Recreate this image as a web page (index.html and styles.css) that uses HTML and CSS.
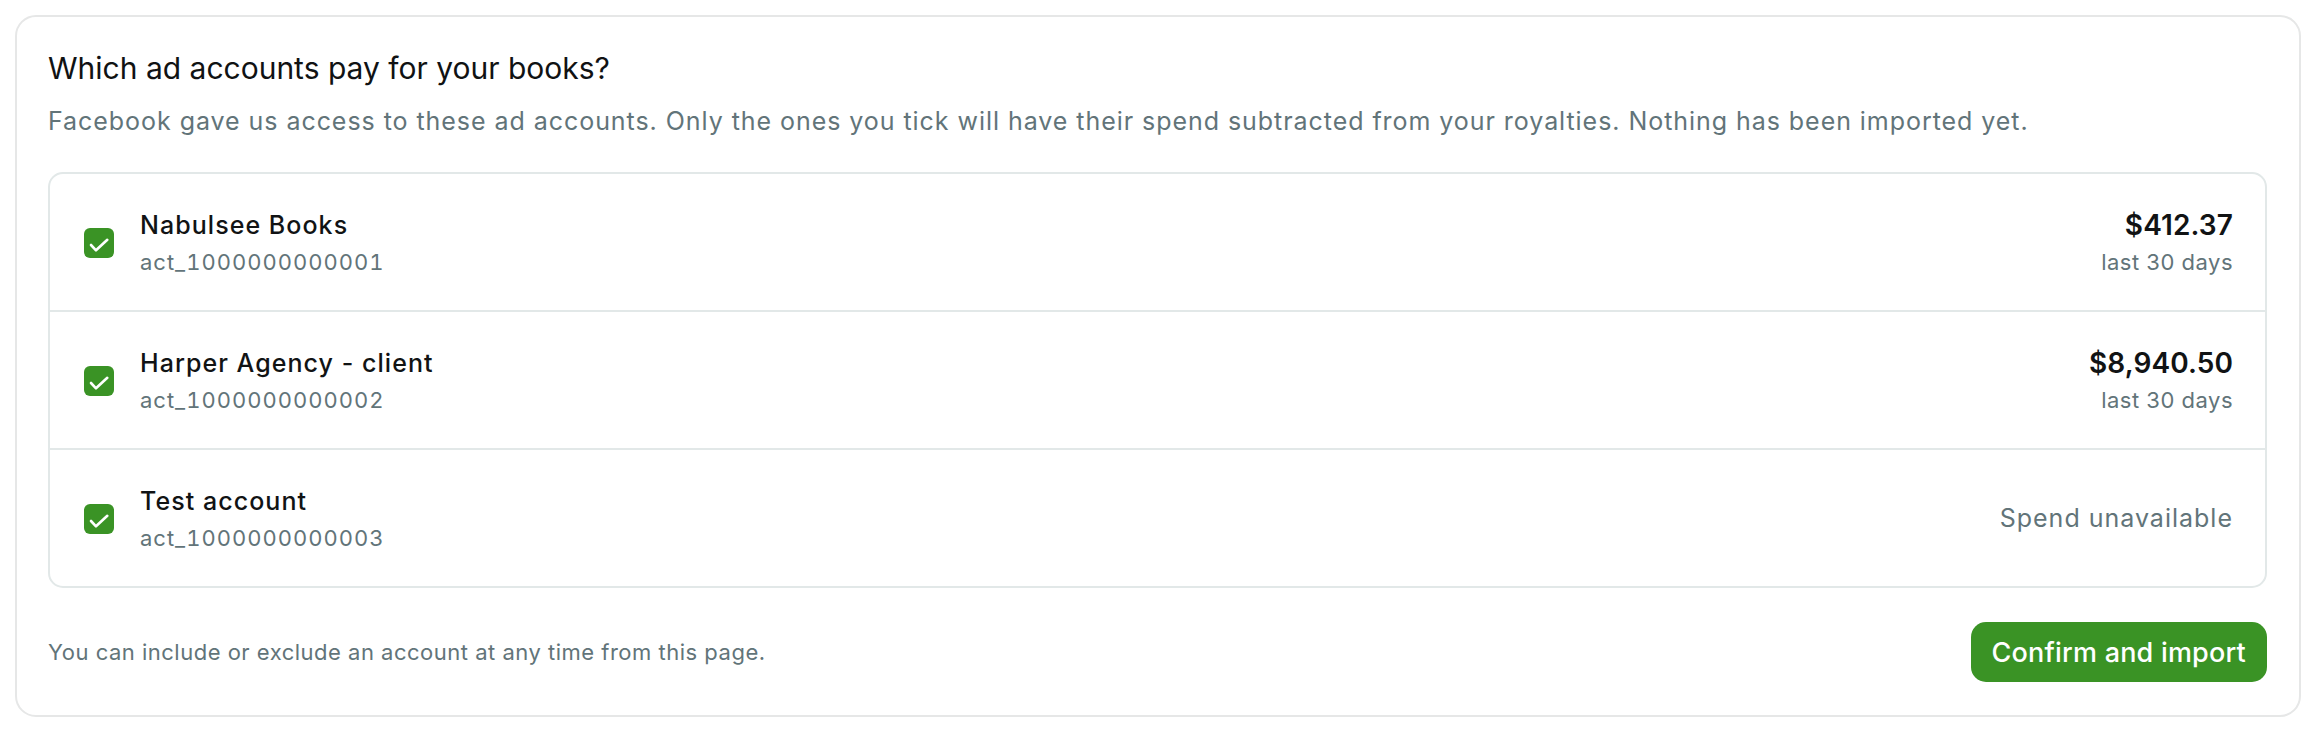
FILE: index.html
```html
<!DOCTYPE html>
<html lang="en">
<head>
<meta charset="utf-8">
<title>Ad accounts</title>
<link rel="stylesheet" href="styles.css">
</head>
<body>
<section class="card">
  <h1 class="title">Which ad accounts pay for your books?</h1>
  <p class="subtitle">Facebook gave us access to these ad accounts. Only the ones you tick will have their spend subtracted from your royalties. Nothing has been imported yet.</p>

  <ul class="accounts">
    <li class="account">
      <span class="check"><svg viewBox="0 0 30 30" width="30" height="30"><path d="M7 17 L12 22.3 L23.3 11.8" fill="none" stroke="#fff" stroke-width="2.6" stroke-linecap="round" stroke-linejoin="round"/></svg></span>
      <div class="info">
        <div class="name">Nabulsee Books</div>
        <div class="id">act_1000000000001</div>
      </div>
      <div class="spend">
        <div class="amount">$412.37</div>
        <div class="period">last 30 days</div>
      </div>
    </li>
    <li class="account">
      <span class="check"><svg viewBox="0 0 30 30" width="30" height="30"><path d="M7 17 L12 22.3 L23.3 11.8" fill="none" stroke="#fff" stroke-width="2.6" stroke-linecap="round" stroke-linejoin="round"/></svg></span>
      <div class="info">
        <div class="name">Harper Agency - client</div>
        <div class="id">act_1000000000002</div>
      </div>
      <div class="spend">
        <div class="amount">$8,940.50</div>
        <div class="period">last 30 days</div>
      </div>
    </li>
    <li class="account">
      <span class="check"><svg viewBox="0 0 30 30" width="30" height="30"><path d="M7 17 L12 22.3 L23.3 11.8" fill="none" stroke="#fff" stroke-width="2.6" stroke-linecap="round" stroke-linejoin="round"/></svg></span>
      <div class="info">
        <div class="name">Test account</div>
        <div class="id">act_1000000000003</div>
      </div>
      <div class="spend">
        <div class="unavailable">Spend unavailable</div>
      </div>
    </li>
  </ul>

  <div class="footer">
    <p class="note">You can include or exclude an account at any time from this page.</p>
    <button class="confirm" type="button">Confirm and import</button>
  </div>
</section>
</body>
</html>
```

FILE: styles.css
```css
* { box-sizing: border-box; }

html, body {
  background: #ffffff;
}

body {
  margin: 15px;
  font-family: Inter, "Noto Sans", "Liberation Sans", sans-serif;
  color: #111314;
}

.card {
  border: 2px solid #e6e7e7;
  border-radius: 21px;
  padding: 32px 32px 31px 31px;
  height: 702px;
}

.title {
  margin: 0;
  font-size: 30px;
  line-height: 39px;
  font-weight: 400;
  color: #101213;
}

.subtitle {
  margin: 15px 0 0 0;
  font-size: 25px;
  line-height: 36px;
  letter-spacing: 0.95px;
  color: #627479;
}

.accounts {
  list-style: none;
  margin: 33px 0 0 0;
  padding: 0;
  border: 2px solid #e2e8e8;
  border-radius: 15px;
}

.account {
  display: flex;
  align-items: center;
  height: 138px;
  padding: 0 32px 0 34px;
  border-bottom: 2px solid #e2e8e8;
}

.account:last-child {
  border-bottom: none;
  height: 136px;
}

.check {
  flex: none;
  width: 30px;
  height: 30px;
  border-radius: 6px;
  background: #3a9325;
  display: flex;
  margin-right: 26px;
  margin-top: 2px;
}

.check svg {
  display: block;
}

.info {
  flex: 1;
  display: flex;
  flex-direction: column;
}

.name {
  font-size: 25px;
  line-height: 36px;
  font-weight: 500;
  letter-spacing: 1.05px;
  color: #111314;
}

.id {
  font-size: 22px;
  line-height: 31px;
  margin-top: 4px;
  letter-spacing: 1px;
  font-variant-numeric: tabular-nums;
  color: #627479;
}

.spend {
  text-align: right;
  display: flex;
  flex-direction: column;
  align-items: flex-end;
}

.amount {
  font-size: 28px;
  line-height: 36px;
  font-weight: 600;
  letter-spacing: 0.1px;
  color: #111314;
}

.period {
  font-size: 22px;
  line-height: 31px;
  margin-top: 4px;
  letter-spacing: 0.5px;
  color: #627479;
}

.unavailable {
  font-size: 25px;
  line-height: 36px;
  letter-spacing: 1px;
  color: #627479;
}

.footer {
  margin-top: 34px;
  display: flex;
  align-items: center;
  justify-content: space-between;
}

.note {
  margin: 0;
  font-size: 22px;
  line-height: 31px;
  letter-spacing: 0.5px;
  color: #627479;
}

.confirm {
  height: 60px;
  padding: 0 21px;
  border: none;
  border-radius: 15px;
  background: #3a9325;
  color: #ffffff;
  font-family: Inter, "Noto Sans", "Liberation Sans", sans-serif;
  font-size: 27px;
  font-weight: 500;
  letter-spacing: 0.2px;
  cursor: pointer;
}
```
